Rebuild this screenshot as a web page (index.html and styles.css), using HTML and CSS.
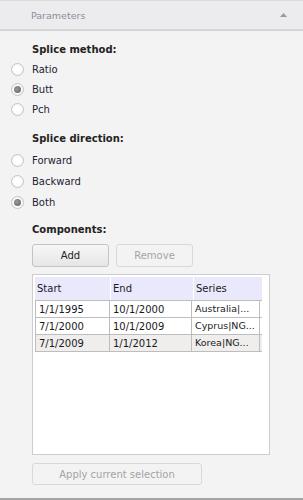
FILE: index.html
```html
<!DOCTYPE html>
<html>
<head>
<meta charset="utf-8">
<link rel="stylesheet" href="styles.css">
</head>
<body>
<div class="panel">
  <div class="header">
    <span class="title">Parameters</span>
    <svg class="caret" width="7" height="4" viewBox="0 0 7 4"><path d="M3.5 0 L7 4 L0 4 Z" fill="#9a9a9a"/></svg>
  </div>
  <div class="content">
    <div class="heading h1">Splice method:</div>
    <div class="group g1">
      <div class="radio-row"><span class="radio"></span><span class="label">Ratio</span></div>
      <div class="radio-row"><span class="radio checked"></span><span class="label">Butt</span></div>
      <div class="radio-row"><span class="radio"></span><span class="label">Pch</span></div>
    </div>
    <div class="heading h2">Splice direction:</div>
    <div class="group g2">
      <div class="radio-row"><span class="radio"></span><span class="label">Forward</span></div>
      <div class="radio-row"><span class="radio"></span><span class="label">Backward</span></div>
      <div class="radio-row"><span class="radio checked"></span><span class="label">Both</span></div>
    </div>
    <div class="heading h3">Components:</div>
    <div class="buttons">
      <button class="btn">Add</button>
      <button class="btn disabled">Remove</button>
    </div>
    <div class="tablebox">
      <div class="grid">
        <div class="hrow">
          <div class="hcell c1">Start</div>
          <div class="hcell c2">End</div>
          <div class="hcell c3">Series</div>
        </div>
        <div class="drow">
          <div class="dcell c1">1/1/1995</div>
          <div class="dcell c2">10/1/2000</div>
          <div class="dcell c3 ser">Australia|...</div>
        </div>
        <div class="drow">
          <div class="dcell c1">7/1/2000</div>
          <div class="dcell c2">10/1/2009</div>
          <div class="dcell c3 ser">Cyprus|NG...</div>
        </div>
        <div class="drow sel">
          <div class="dcell c1">7/1/2009</div>
          <div class="dcell c2">1/1/2012</div>
          <div class="dcell c3 ser">Korea|NG...</div>
        </div>
      </div>
    </div>
    <button class="btn disabled apply">Apply current selection</button>
  </div>
</div>
</body>
</html>
```
FILE: styles.css
```css
* { box-sizing: border-box; }
html, body { margin: 0; padding: 0; }
body {
  width: 303px;
  height: 500px;
  background: #f3f3f3;
  font-family: "DejaVu Sans", Verdana, sans-serif;
  font-size: 10px;
  color: #1f2233;
  overflow: hidden;
}
.panel {
  height: 500px;
  border-bottom: 2px solid #a3a3a3;
  display: flex;
  flex-direction: column;
}
.header {
  height: 31px;
  background: #ececee;
  border-top: 1px solid #dcdcdc;
  border-bottom: 2px solid #d6d6d8;
  display: flex;
  align-items: center;
  padding: 0 16px 0 31px;
  justify-content: space-between;
}
.title {
  font-size: 9.5px;
  color: #8b8f98;
  margin-top: 1px;
}
.caret { margin-top: -1px; }
.content {
  padding-left: 32px;
  display: flex;
  flex-direction: column;
  align-items: flex-start;
}
.heading {
  font-weight: bold;
  color: #222;
  height: 14px;
  line-height: 14px;
}
.h1 { margin-top: 12px; }
.h2 { margin-top: 13px; }
.h3 { margin-top: 10px; }
.group { margin-left: -21px; display: flex; flex-direction: column; }
.g1 { margin-top: 2px; }
.g1 .radio-row { height: 20px; }
.g2 { margin-top: 4px; }
.g2 .radio-row { height: 21px; }
.radio-row {
  display: flex;
  align-items: center;
  gap: 8px;
}
.radio {
  width: 13px;
  height: 13px;
  border-radius: 50%;
  border: 1px solid #c4c4c4;
  background: radial-gradient(circle, #ffffff 40%, #ececec 100%);
  display: flex;
  align-items: center;
  justify-content: center;
}
.radio.checked::after {
  content: "";
  width: 7px;
  height: 7px;
  border-radius: 50%;
  background: radial-gradient(circle at 40% 40%, #9a9a9a, #5f5f5f);
}
.label { color: #1f2233; }
.buttons {
  display: flex;
  gap: 7px;
  margin-top: 7px;
}
.btn {
  font-family: "DejaVu Sans", Verdana, sans-serif;
  font-size: 10px;
  height: 23px;
  width: 77px;
  border: 1px solid #c4c4c4;
  border-radius: 3px;
  background: linear-gradient(#f7f7f7, #e6e6e6);
  color: #222;
  padding: 0;
}
.btn.disabled {
  background: #f3f3f3;
  border-color: #d8d8d8;
  color: #a4a4a4;
}
.tablebox {
  margin-top: 7px;
  width: 238px;
  height: 181px;
  background: #fff;
  border: 1px solid #cdcdcd;
  padding: 2px 0 0 2px;
}
.grid { width: 227px; }
.hrow {
  display: flex;
  height: 23px;
  gap: 1px;
}
.hcell {
  background: #e9e9fb;
  display: flex;
  align-items: center;
  padding-left: 2px;
  color: #1a1a2a;
}
.c1 { width: 75px; }
.c2 { width: 82px; }
.c3 { width: 68px; }
.drow {
  display: flex;
  height: 17px;
  border-top: 1px solid #bdbdbd;
  border-left: 1px solid #bdbdbd;
}
.drow:last-child { border-bottom: 1px solid #bdbdbd; height: 18px; }
.drow.sel { background: #efeeec; }
.dcell {
  border-right: 1px solid #bdbdbd;
  display: flex;
  align-items: center;
  padding-left: 3px;
  color: #1a1a1a;
  white-space: nowrap;
  overflow: hidden;
}
.drow .c1 { width: 74px; }
.ser { font-size: 9.5px; padding-bottom: 2px; }
.apply {
  margin-top: 8px;
  width: 170px;
  height: 22px;
}
```
